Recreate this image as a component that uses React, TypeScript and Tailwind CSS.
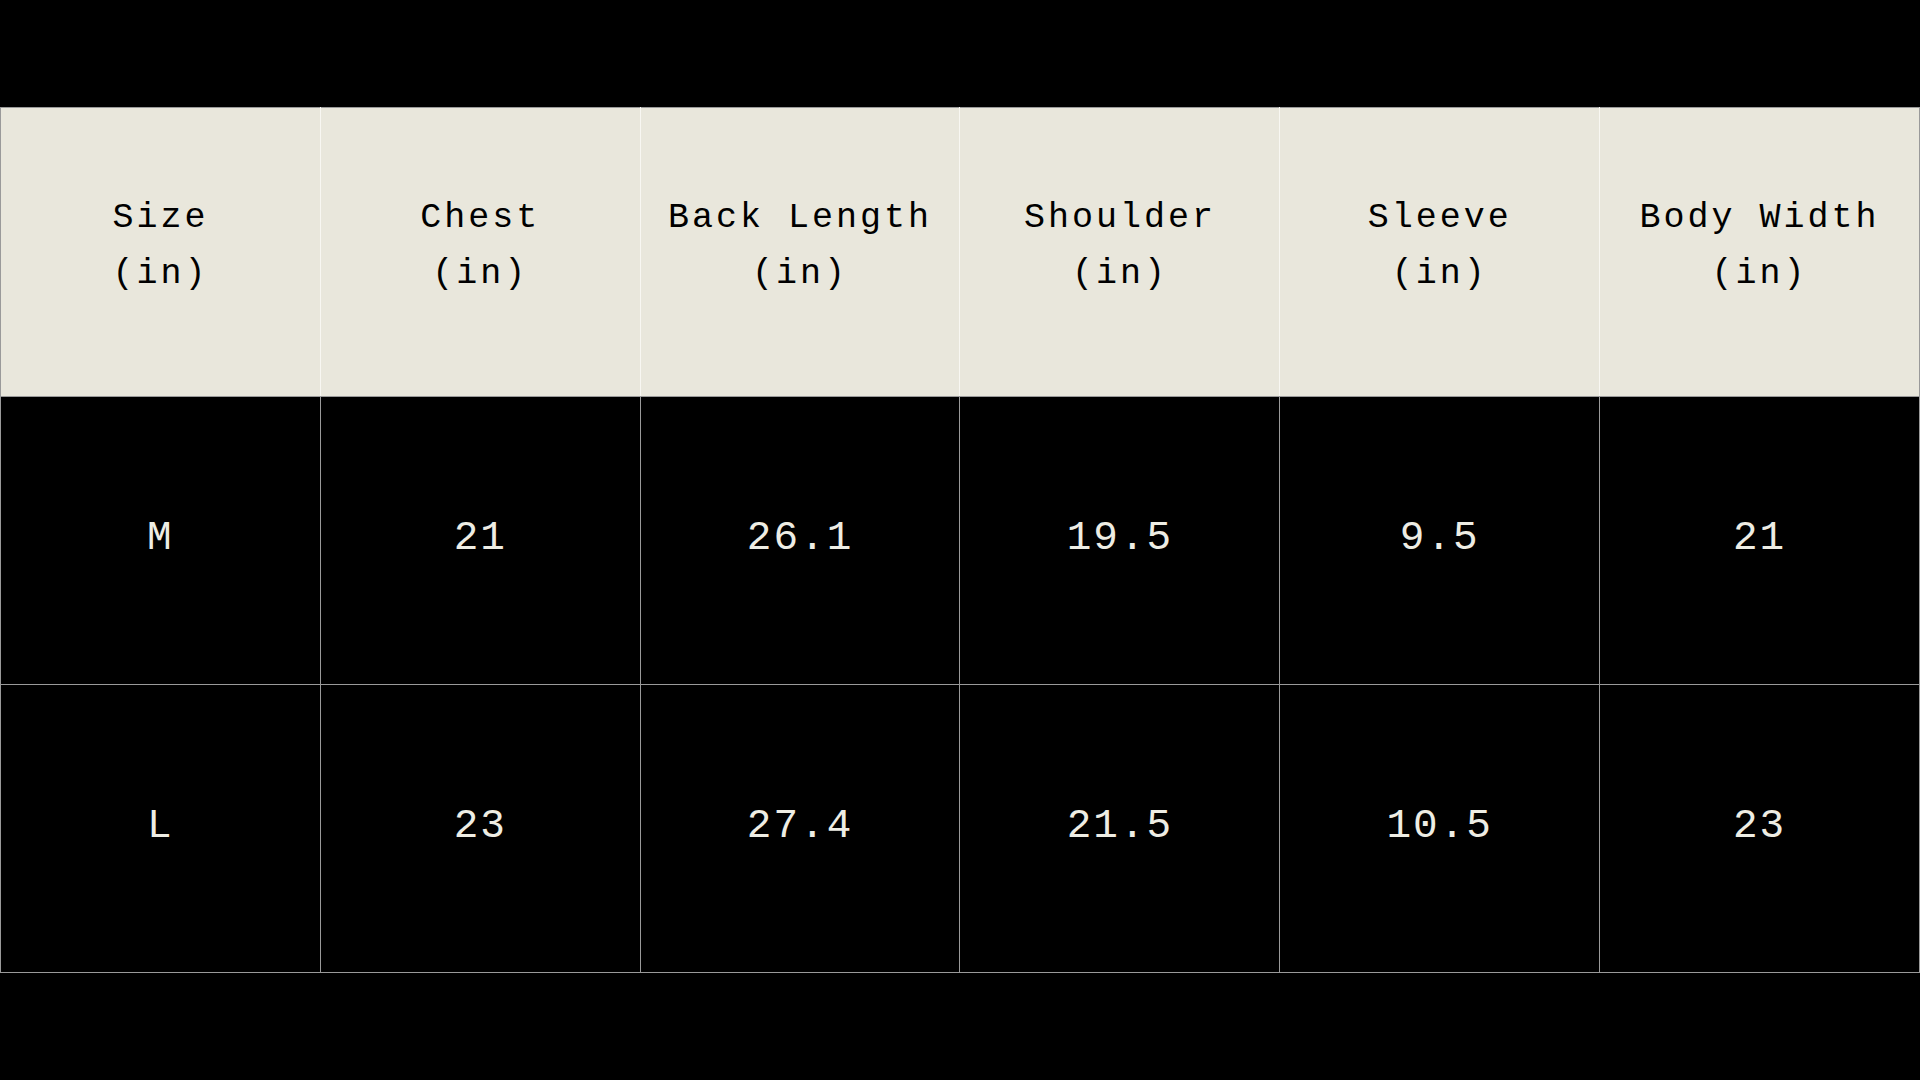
import React from 'react';

const headers = [
  ['Size', '(in)'],
  ['Chest', '(in)'],
  ['Back Length', '(in)'],
  ['Shoulder', '(in)'],
  ['Sleeve', '(in)'],
  ['Body Width', '(in)'],
];

const rows = [
  ['M', '21', '26.1', '19.5', '9.5', '21'],
  ['L', '23', '27.4', '21.5', '10.5', '23'],
];

export default function App() {
  return (
    <div className="w-[1920px] h-[1080px] bg-black pt-[107px] font-['Liberation_Mono',monospace] overflow-hidden">
      <table className="w-[1920px] table-fixed border-collapse">
        <thead>
          <tr className="h-[289px] bg-[#e9e7dc]">
            {headers.map(([a, b], i) => (
              <th
                key={i}
                className="border border-[#9a9a9a] border-x-[#f8f7f2] first:border-l-[#9a9a9a] last:border-r-[#9a9a9a] p-0 pb-[12px] text-center align-middle font-normal text-[35px] leading-[56px] tracking-[3px] text-black"
              >
                <div>{a}</div>
                <div>{b}</div>
              </th>
            ))}
          </tr>
        </thead>
        <tbody>
          {rows.map((r, ri) => (
            <tr key={ri} className="h-[288px]">
              {r.map((c, ci) => (
                <td
                  key={ci}
                  className="border border-[#9a9a9a] p-0 pb-[4px] text-center align-middle text-[41px] tracking-[2px] text-[#eeede4]"
                >
                  {c}
                </td>
              ))}
            </tr>
          ))}
        </tbody>
      </table>
    </div>
  );
}
